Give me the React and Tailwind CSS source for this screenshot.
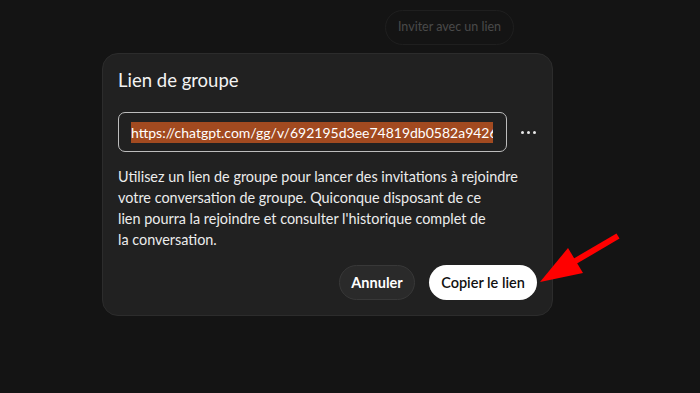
export default function App() {
  return (
    <div className="relative w-[700px] h-[393px] bg-[#141414] overflow-hidden" style={{ fontFamily: 'Lato, "Noto Sans", sans-serif' }}>
      <div className="flex justify-end pt-[10px] pr-[186px]">
        <div className="h-[35px] px-[12px] rounded-full border border-[#1f1f1f] flex items-center text-[12.5px] text-[#4a4a4a]">
          Inviter avec un lien
        </div>
      </div>
      <div className="ml-[102px] mt-[8px] w-[451px] h-[263px] rounded-[16px] bg-[#212121] border border-[#2c2c2c] px-[15px] pt-[12px]">
        <div className="text-[18.5px] leading-[28px] text-[#f3f3f3]">Lien de groupe</div>
        <div className="mt-[18px] flex items-center gap-[14px]">
          <div className="w-[389px] h-[40px] rounded-[7px] border-[1.5px] border-[#bdbdbd] flex items-center pl-[12px] pr-[13px] overflow-hidden">
            <div className="overflow-hidden whitespace-nowrap w-full">
              <span className="bg-[#a24a20] text-white text-[14px] leading-[21px] inline-block">https://chatgpt.com/gg/v/692195d3ee74819db0582a9426</span>
            </div>
          </div>
          <div className="flex gap-[3px] items-center">
            <span className="w-[3px] h-[3px] rounded-full bg-[#e8e8e8]"></span>
            <span className="w-[3px] h-[3px] rounded-full bg-[#e8e8e8]"></span>
            <span className="w-[3px] h-[3px] rounded-full bg-[#e8e8e8]"></span>
          </div>
        </div>
        <p className="mt-[14px] text-[14.4px] leading-[21px] text-[#ececec] whitespace-nowrap">
          Utilisez un lien de groupe pour lancer des invitations à rejoindre<br />
          votre conversation de groupe. Quiconque disposant de ce<br />
          lien pourra la rejoindre et consulter l'historique complet de<br />
          la conversation.
        </p>
        <div className="mt-[15px] flex justify-end gap-[14px]">
          <button className="h-[35px] w-[76px] rounded-full bg-[#2a2a2a] border border-[#383838] text-[14.5px] font-bold text-white">Annuler</button>
          <button className="h-[35px] w-[108px] rounded-full bg-white text-[14.5px] font-semibold text-[#111]">Copier le lien</button>
        </div>
      </div>
      <svg className="absolute left-0 top-0" width="700" height="393" viewBox="0 0 700 393">
        <line x1="618" y1="236" x2="572" y2="263" stroke="#ff0000" strokeWidth="6" />
        <polygon points="540,282 568,248 583,273" fill="#ff0000" />
      </svg>
    </div>
  );
}
